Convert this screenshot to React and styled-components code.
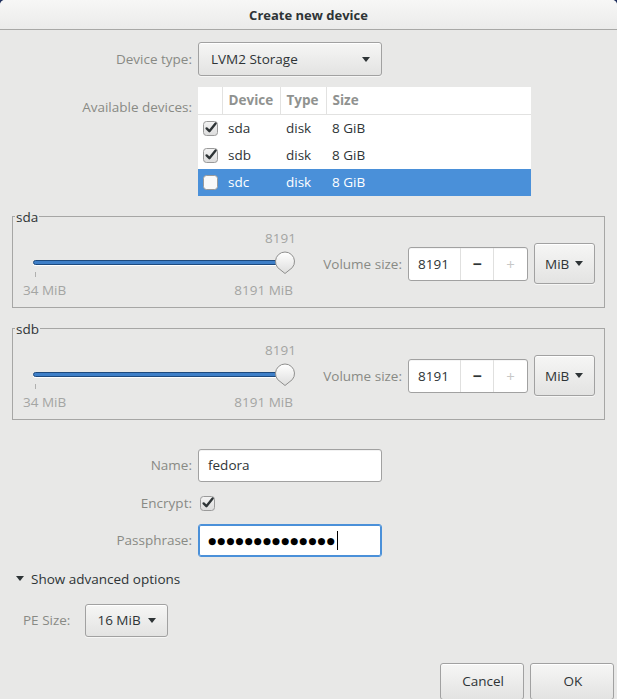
import React from 'react'
import styled, { createGlobalStyle } from 'styled-components'

const GlobalStyle = createGlobalStyle`
  html, body {
    margin: 0;
    padding: 0;
    background: #1e2f5e;
  }
  body {
    font-family: 'Open Sans', 'Liberation Sans', sans-serif;
    font-size: 13.5px;
    color: #2e3436;
  }
`

const Window = styled.div`
  width: 617px;
  height: 699px;
  background: #e8e8e7;
  border-radius: 5px 5px 0 0;
  display: flex;
  flex-direction: column;
  overflow: hidden;
`

const TitleBar = styled.div`
  height: 29px;
  flex: none;
  display: flex;
  align-items: center;
  justify-content: center;
  font-weight: 700;
  font-size: 13px;
  background: linear-gradient(#f7f7f6, #ebebea);
  border-bottom: 1px solid #a8a8a6;
`

const Content = styled.div`
  display: flex;
  flex-direction: column;
  padding-top: 12px;
`

const FormGrid = styled.div`
  display: grid;
  grid-template-columns: 192px auto;
  column-gap: 6px;
  row-gap: ${p => p.gap || 10}px;
  align-items: center;
  justify-items: start;
  margin-top: ${p => p.top || 0}px;
`

const Label = styled.span`
  justify-self: end;
  color: #888a85;
  line-height: 16px;
  align-self: ${p => (p.top ? 'start' : 'center')};
  margin-top: ${p => p.top || 0}px;
`

const Button = styled.button`
  font: inherit;
  color: #2e3436;
  height: ${p => p.h || 34}px;
  width: ${p => p.w}px;
  padding: 0 ${p => p.pad || 10}px 0 ${p => p.padLeft || 12}px;
  border: 1px solid #a1a1a1;
  border-radius: 3px;
  background: linear-gradient(#f6f6f5, #e3e3e2);
  box-shadow: inset 0 1px #fff, 0 1px rgba(255, 255, 255, 0.6);
  display: flex;
  align-items: center;
  justify-content: ${p => (p.center ? 'center' : 'space-between')};
  gap: 6px;
  box-sizing: border-box;
`

const Arrow = styled.span`
  width: 0;
  height: 0;
  border-left: 4.5px solid transparent;
  border-right: 4.5px solid transparent;
  border-top: 5px solid #2e3436;
`

const Table = styled.table`
  width: 333px;
  border-collapse: collapse;
  background: #fff;
  margin-top: 1px;
`

const Th = styled.th`
  height: 27px;
  padding: 0 0 0 6px;
  text-align: left;
  font-weight: 700;
  color: #909290;
  border-bottom: 1px solid #e2e2e1;
  border-right: ${p => (p.last ? 'none' : '1px solid #e2e2e1')};
  width: ${p => (p.w ? `${p.w}px` : 'auto')};
  box-sizing: border-box;
`

const Tr = styled.tr`
  background: ${p => (p.selected ? '#4a90d9' : '#fff')};
  color: ${p => (p.selected ? '#fff' : '#2e3436')};
`

const Td = styled.td`
  height: 27px;
  padding: 0 0 0 ${p => p.pad || 6}px;
  vertical-align: middle;
`

const CheckSvg = styled.svg`
  display: block;
  margin-left: ${p => p.ml || 0}px;
`

const CheckCell = styled.div`
  height: 22px;
  display: flex;
  align-items: center;
`

const Check = ({ checked, ml }) => (
  <CheckSvg ml={ml} width="16" height="16" viewBox="0 0 16 16">
    <defs>
      <linearGradient id="cbg" x1="0" y1="0" x2="0" y2="1">
        <stop offset="0" stopColor="#f4f4f4" />
        <stop offset="1" stopColor="#dcdcdc" />
      </linearGradient>
    </defs>
    <rect
      x="0.5"
      y="1.5"
      width="14"
      height="14"
      rx="3"
      fill={checked ? 'url(#cbg)' : '#f9f9f9'}
      stroke="#9a9a9a"
    />
    {checked && (
      <path
        d="M3.6 8.4 L6.4 11.2 L12.6 3.4"
        fill="none"
        stroke="#2e3436"
        strokeWidth="2.4"
        strokeLinecap="round"
        strokeLinejoin="round"
      />
    )}
  </CheckSvg>
)

const Frame = styled.fieldset`
  margin: 13px 12px 0;
  padding: 0;
  border: 1px solid #a6a6a5;
  min-width: 0;
`

const Legend = styled.legend`
  margin-left: 2px;
  padding: 0 1px;
  line-height: 16px;
  color: #2e3436;
`

const FrameBody = styled.div`
  display: flex;
  align-items: center;
  padding: 5px 9px 9px 10px;
`

const SliderBlock = styled.div`
  width: 274px;
  display: flex;
  flex-direction: column;
`

const SliderValue = styled.div`
  line-height: 16px;
  text-align: right;
  color: #a4a5a3;
  padding-right: 1px;
`

const Track = styled.div`
  position: relative;
  height: 24px;
`

const Trough = styled.div`
  margin: 14px 11px 0 10px;
  height: 3px;
  border-radius: 3px;
  background: #3e7fc8;
  border: 1px solid #1d4a7e;
  box-shadow: 0 1px #fff;
`

const Knob = styled.svg`
  position: absolute;
  left: 251px;
  top: 5px;
`

const Ticks = styled.div`
  height: 8px;
`

const Tick = styled.div`
  margin: 2px 0 0 12px;
  width: 1px;
  height: 5px;
  background: #b0b0af;
`

const Marks = styled.div`
  display: flex;
  justify-content: space-between;
  line-height: 16px;
  color: #a4a5a3;
  margin-top: 4px;
  padding-right: 4px;
`

const SizeGroup = styled.div`
  margin-left: auto;
  display: flex;
  align-items: center;
  gap: 6px;
`

const SizeLabel = styled.span`
  color: #888a85;
`

const Spin = styled.div`
  display: flex;
  height: 34px;
  width: 120px;
  box-sizing: border-box;
  background: #fff;
  border: 1px solid #a1a1a1;
  border-radius: 3px;
  box-shadow: inset 0 1px rgba(0, 0, 0, 0.04);
`

const SpinText = styled.div`
  flex: 1;
  display: flex;
  align-items: center;
  padding-left: 9px;
`

const SpinButton = styled.div`
  width: ${p => p.w}px;
  display: flex;
  align-items: center;
  justify-content: center;
  border-left: 1px solid #e0e0df;
  color: ${p => (p.disabled ? '#c8c8c7' : '#2e3436')};
  font-size: ${p => (p.disabled ? 15 : 16)}px;
  font-weight: ${p => (p.disabled ? 400 : 700)};
`

const Entry = styled.div`
  width: 184px;
  height: 33px;
  box-sizing: border-box;
  background: #fff;
  border: 1px solid ${p => (p.focus ? '#4a90d9' : '#a1a1a1')};
  box-shadow: ${p => (p.focus ? 'inset 0 0 0 1px #4a90d9' : 'inset 0 1px rgba(0,0,0,0.05)')};
  border-radius: 3px;
  display: flex;
  align-items: center;
  padding-left: 9px;
`

const Dots = styled.span`
  font-family: 'DejaVu Sans', sans-serif;
  font-size: 9.3px;
  letter-spacing: 1px;
  color: #000;
`

const Caret = styled.span`
  width: 1px;
  height: 19px;
  background: #000;
  margin-left: 1px;
`

const Expander = styled.div`
  display: flex;
  align-items: center;
  gap: 7px;
  line-height: 16px;
  margin-top: 14px;
  padding-left: 16px;
`

const ExpArrow = styled.span`
  width: 0;
  height: 0;
  border-left: 4.5px solid transparent;
  border-right: 4.5px solid transparent;
  border-top: 5px solid #2e3436;
`

const AdvancedRow = styled.div`
  display: flex;
  align-items: center;
  gap: 15px;
  margin-top: 17px;
  padding-left: 23px;
`

const ActionRow = styled.div`
  display: flex;
  justify-content: flex-end;
  gap: 6px;
  margin-top: 26px;
  padding-right: 3px;
`

const Knobby = () => (
  <Knob width="22" height="24" viewBox="0 0 22 24">
    <defs>
      <linearGradient id="kg" x1="0" y1="0" x2="0" y2="1">
        <stop offset="0" stopColor="#ffffff" />
        <stop offset="1" stopColor="#dededd" />
      </linearGradient>
    </defs>
    <path
      d="M3.7 16.6 A9.5 9.5 0 1 1 18.3 16.6 L11 22.5 Z"
      fill="url(#kg)"
      stroke="#8f8f8e"
      strokeLinejoin="round"
    />
  </Knob>
)

const VolumeFrame = ({ name }) => (
  <Frame>
    <Legend>{name}</Legend>
    <FrameBody>
      <SliderBlock>
        <SliderValue>8191</SliderValue>
        <Track>
          <Trough />
          <Knobby />
        </Track>
        <Ticks>
          <Tick />
        </Ticks>
        <Marks>
          <span>34 MiB</span>
          <span>8191 MiB</span>
        </Marks>
      </SliderBlock>
      <SizeGroup>
        <SizeLabel>Volume size:</SizeLabel>
        <Spin>
          <SpinText>8191</SpinText>
          <SpinButton w={32}>−</SpinButton>
          <SpinButton w={33} disabled>
            +
          </SpinButton>
        </Spin>
        <Button w={61} h={41} padLeft={10} pad={11}>
          MiB
          <Arrow />
        </Button>
      </SizeGroup>
    </FrameBody>
  </Frame>
)

const devices = [
  { name: 'sda', checked: true },
  { name: 'sdb', checked: true },
  { name: 'sdc', checked: false, selected: true },
]

export default function App() {
  return (
    <Window>
      <GlobalStyle />
      <TitleBar>Create new device</TitleBar>
      <Content>
        <FormGrid gap={10}>
          <Label>Device type:</Label>
          <Button w={184} h={34} pad={11}>
            LVM2 Storage
            <Arrow />
          </Button>
          <Label top={13}>Available devices:</Label>
          <Table>
            <thead>
              <tr>
                <Th w={24} />
                <Th w={58}>Device</Th>
                <Th w={46}>Type</Th>
                <Th last>Size</Th>
              </tr>
            </thead>
            <tbody>
              {devices.map(d => (
                <Tr key={d.name} selected={d.selected}>
                  <Td pad={5}>
                    <Check checked={d.checked} />
                  </Td>
                  <Td>{d.name}</Td>
                  <Td>disk</Td>
                  <Td>8 GiB</Td>
                </Tr>
              ))}
            </tbody>
          </Table>
        </FormGrid>

        <VolumeFrame name="sda" />
        <VolumeFrame name="sdb" />

        <FormGrid gap={10} top={29}>
          <Label>Name:</Label>
          <Entry>fedora</Entry>
          <Label>Encrypt:</Label>
          <CheckCell>
            <Check checked ml={2} />
          </CheckCell>
          <Label>Passphrase:</Label>
          <Entry focus>
            <Dots>{'●'.repeat(14)}</Dots>
            <Caret />
          </Entry>
        </FormGrid>

        <Expander>
          <ExpArrow />
          <span>Show advanced options</span>
        </Expander>

        <AdvancedRow>
          <SizeLabel>PE Size:</SizeLabel>
          <Button w={83} h={33} padLeft={11} pad={11}>
            16 MiB
            <Arrow />
          </Button>
        </AdvancedRow>

        <ActionRow>
          <Button w={84} h={37} center>
            Cancel
          </Button>
          <Button w={84} h={37} center>
            OK
          </Button>
        </ActionRow>
      </Content>
    </Window>
  )
}
